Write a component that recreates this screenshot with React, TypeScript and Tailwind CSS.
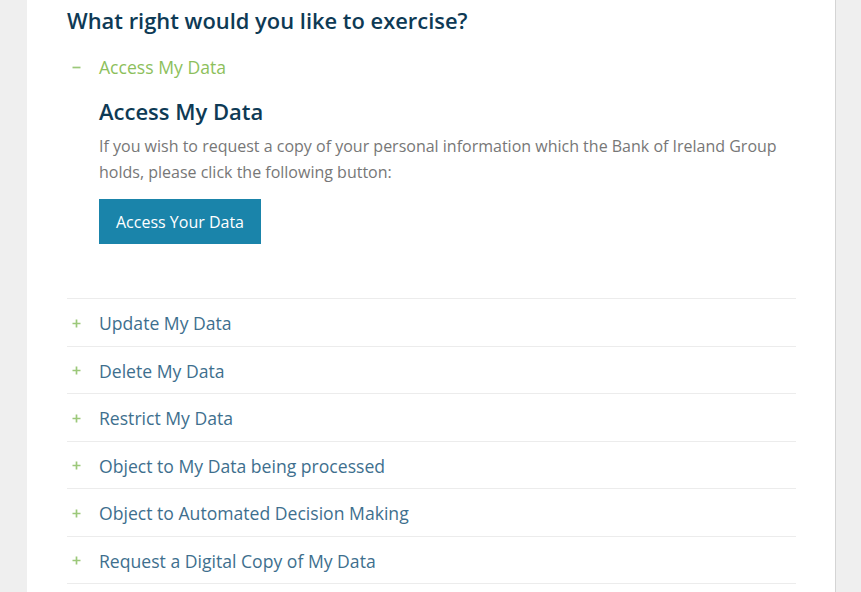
import React from "react";

const rights = [
  "Update My Data",
  "Delete My Data",
  "Restrict My Data",
  "Object to My Data being processed",
  "Object to Automated Decision Making",
  "Request a Digital Copy of My Data",
];

function PlusIcon() {
  return (
    <svg width="9" height="9" viewBox="0 0 9 9" className="shrink-0">
      <path d="M4.5 0.5v8M0.5 4.5h8" stroke="#9cc87a" strokeWidth="1.7" />
    </svg>
  );
}

function MinusIcon() {
  return (
    <svg width="9" height="9" viewBox="0 0 9 9" className="shrink-0">
      <path d="M0.5 4.5h8" stroke="#9cc87a" strokeWidth="1.7" />
    </svg>
  );
}

export default function App() {
  return (
    <div
      className="flex h-[592px] w-full overflow-hidden bg-[#efefef]"
      style={{ fontFamily: '"Open Sans", "Liberation Sans", sans-serif' }}
    >
      <div className="w-[27px] shrink-0" />
      <main className="w-[809px] shrink-0 border-r border-[#d4d4d4] bg-white pl-[40px] pr-[39px]">
        <h2 className="pt-[6px] text-[21.9px] font-semibold leading-[30px] text-[#0e3a55]">
          What right would you like to exercise?
        </h2>

        <button type="button" className="mt-[18px] flex h-[26px] items-center text-[17.6px] text-[#8dbf5c]">
          <span className="flex w-[32px] pl-[5px]">
            <MinusIcon />
          </span>
          Access My Data
        </button>

        <div className="pl-[32px]">
          <h3 className="mt-[17px] text-[22px] font-semibold leading-[28px] text-[#0e3a55]">Access My Data</h3>
          <p className="mt-[8px] text-[16px] leading-[26px] text-[#777777]">
            If you wish to request a copy of your personal information which the Bank of Ireland Group holds, please
            click the following button:
          </p>
          <button
            type="button"
            className="mt-[14px] h-[45px] w-[162px] bg-[#1a84aa] text-[16px] text-white"
          >
            Access Your Data
          </button>
        </div>

        <ul className="mt-[54px]">
          {rights.map((item) => (
            <li
              key={item}
              className="flex h-[47.5px] items-center border-t border-[#ececec] pt-[2px] text-[17.6px] text-[#3e6f8e]"
            >
              <span className="flex w-[32px] pl-[5px]">
                <PlusIcon />
              </span>
              {item}
            </li>
          ))}
          <li className="border-t border-[#ececec]" />
        </ul>
      </main>
      <div className="flex-1" />
    </div>
  );
}
